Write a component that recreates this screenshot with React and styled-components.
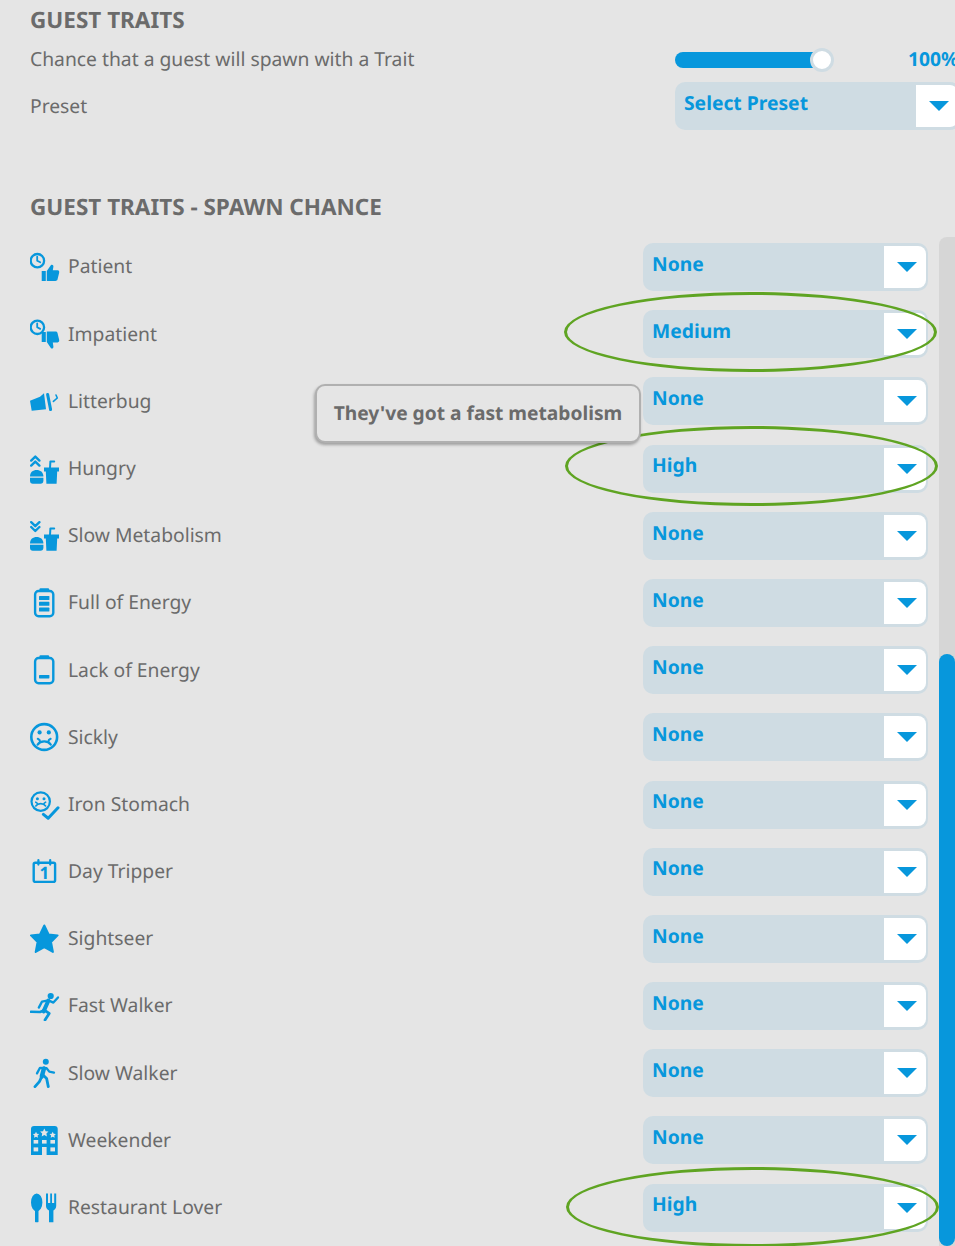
import React from 'react';
import styled, { createGlobalStyle } from 'styled-components';

const BLUE = '#0797dc';
const BG = '#e5e5e5';

const GlobalStyle = createGlobalStyle`
  html, body {
    margin: 0;
    padding: 0;
    background: ${BG};
    overflow: hidden;
  }
`;

const Page = styled.div`
  position: relative;
  width: 955px;
  height: 1246px;
  overflow: hidden;
  background: ${BG};
  color: #6b6b6b;
  font-family: "Noto Sans", "Open Sans", sans-serif;
  text-rendering: geometricPrecision;
  display: flex;
  flex-direction: column;
`;

const Heading = styled.h2`
  margin: ${(p) => p.$margin};
  padding-left: 30px;
  font-size: 22.5px;
  line-height: 28px;
  font-weight: 700;
`;

const TopRow = styled.div`
  display: flex;
  align-items: center;
  box-sizing: border-box;
  height: 48px;
  padding: ${(p) => p.$pad || 0}px 0 0 30px;
`;

const TopLabel = styled.div`
  width: 645px;
  flex: none;
  font-size: 19.3px;
  line-height: 26px;
  padding-bottom: ${(p) => p.$lift || 0}px;
`;

const Slider = styled.div`
  position: relative;
  width: 146px;
  height: 16px;
  flex: none;
  background: ${BLUE};
  border-radius: 8px;
`;

const Thumb = styled.div`
  position: absolute;
  top: -4px;
  left: 135px;
  width: 18px;
  height: 18px;
  box-sizing: content-box;
  background: #fff;
  border: 3px solid #cfdce3;
  border-radius: 50%;
`;

const Percent = styled.div`
  margin-left: 87px;
  flex: none;
  color: ${BLUE};
  font-size: 19.3px;
  font-weight: 700;
  line-height: 26px;
  padding-bottom: 2px;
`;

const Select = styled.div`
  width: 285px;
  height: 48px;
  flex: none;
  box-sizing: border-box;
  display: flex;
  justify-content: space-between;
  align-items: center;
  padding: 3px 2px 3px 9px;
  background: #cfdce3;
  border-radius: 10px;
`;

const SelectValue = styled.span`
  color: ${BLUE};
  font-size: 19.3px;
  font-weight: 700;
  line-height: 26px;
  padding-bottom: 6.5px;
`;

const SelectButton = styled.div`
  width: 42px;
  height: 42px;
  flex: none;
  box-sizing: border-box;
  padding: 16px 0 0 13px;
  background: #fff;
  border-radius: 0 8px 8px 0;

  svg {
    display: block;
  }
`;

const ListSection = styled.div`
  display: flex;
  flex: 1;
  min-height: 0;
  margin-top: 16px;
`;

const List = styled.div`
  flex: 1;
  display: flex;
  flex-direction: column;
  gap: 19.2px;
  padding: 6px 11px 0 30px;
`;

const Row = styled.div`
  display: flex;
  align-items: center;
  justify-content: space-between;
  height: 48px;
`;

const RowLabel = styled.div`
  display: flex;
  align-items: center;
  gap: 8px;
  font-size: 19.3px;
  line-height: 26px;

  span {
    margin-top: -0.6px;
    margin-bottom: 0.6px;
  }
`;

const IconBox = styled.svg`
  width: 30px;
  height: 30px;
  flex: none;
  fill: ${BLUE};
  color: ${BLUE};
`;

const Scrollbar = styled.div`
  width: 16px;
  flex: none;
  display: flex;
  flex-direction: column;
  justify-content: flex-end;
  background: #d6d6d6;
  border-radius: 8px 0 0 0;
`;

const ScrollThumb = styled.div`
  height: 592px;
  background: ${BLUE};
  border-radius: 8px;
`;

const Tooltip = styled.div`
  position: absolute;
  top: 384px;
  left: 315px;
  width: 326px;
  height: 59px;
  box-sizing: border-box;
  display: flex;
  align-items: center;
  justify-content: center;
  padding-bottom: 2px;
  background: ${BG};
  border: 2px solid #b0b0b0;
  border-radius: 10px;
  box-shadow: -1px 2px 3px rgba(0, 0, 0, 0.3);
  font-size: 19.2px;
  font-weight: 700;
  line-height: 26px;
`;

const Ring = styled.div`
  position: absolute;
  top: ${(p) => p.$top}px;
  left: ${(p) => p.$left}px;
  width: 373px;
  height: 80px;
  box-sizing: border-box;
  border: 3px solid #5fa422;
  border-radius: 50%;
`;

const Arrow = () => (
  <svg width="20" height="10" viewBox="0 0 20 10">
    <path d="M0 0H20L10 10Z" fill={BLUE} />
  </svg>
);

const Line = ({ d, w = 2 }) => (
  <path d={d} fill="none" stroke="currentColor" strokeWidth={w} strokeLinecap="round" strokeLinejoin="round" />
);

const Clock = ({ cy }) => (
  <g>
    <circle cx="7.4" cy={cy} r="6.7" fill="none" stroke="currentColor" strokeWidth="2.3" />
    <Line d={`M7.2 ${cy - 4}V${cy}L10.2 ${cy + 1.6}`} w={1.8} />
  </g>
);

const Burger = () => (
  <g>
    <path d="M0 22.6C0 18 3 16 6.6 16S13.4 18 13.4 22.6Z" />
    <path d="M0 23.8H13.4V26.5C13.4 28.6 12.3 29.8 10.5 29.8H2.8C1 29.8 0 28.6 0 26.5Z" />
    <path d="M14 13.6H29V17.6H27.2L26.6 29.8H16.4L15.8 17.6H14Z" />
    <Line d="M20 14L20.4 7.4H24.2" w={2} />
  </g>
);

const Battery = ({ children }) => (
  <g>
    <rect x="5.1" y="3" width="18.2" height="25.2" rx="3.5" fill="none" stroke="currentColor" strokeWidth="2.4" />
    <rect x="9.4" y="0.3" width="9.8" height="3.6" rx="1.2" />
    {children}
  </g>
);

const ICONS = {
  patient: (
    <>
      <Clock cy={8.7} />
      <path d="M11.7 19H15.8V29H11.7Z" />
      <path d="M16.8 19L21 13C22.4 12.2 23.6 13.2 23.4 14.8L22.8 18.2H27.6C29 18.2 29.5 19.6 29.1 21L27.5 27.6C27.2 28.6 26.4 29 25.4 29H16.8Z" />
    </>
  ),
  impatient: (
    <>
      <Clock cy={8.3} />
      <path d="M11.7 13H15.8V23H11.7Z" />
      <path d="M16.8 12.6H25.4C26.4 12.6 27.2 13 27.5 14L29.1 20.6C29.5 22 29 23.4 27.6 23.4H22.8L23.4 27.4C23.6 29 22.4 30 21 29.2L16.8 23Z" />
    </>
  ),
  litter: (
    <>
      <path d="M0 14.7L10 10.7L14 7.3L16 23.3L1.7 24.7Z" />
      <Line d="M17.6 8.4L20.6 23.6" w={3} />
      <Line d="M26 9L27.3 12L23.4 15.4" w={1.6} />
    </>
  ),
  hungry: (
    <>
      <Line d="M1.2 6.6L5.3 2.6L9.4 6.6" w={2.4} />
      <Line d="M1.2 11.6L5.3 7.6L9.4 11.6" w={2.4} />
      <Burger />
    </>
  ),
  slow: (
    <>
      <Line d="M1.2 1.2L5.3 5.2L9.4 1.2" w={2.4} />
      <Line d="M1.2 6L5.3 10L9.4 6" w={2.4} />
      <Burger />
    </>
  ),
  full: (
    <Battery>
      <rect x="9" y="8" width="10.4" height="4" rx="0.6" />
      <rect x="9" y="13.8" width="10.4" height="4" rx="0.6" />
      <rect x="9" y="19.6" width="10.4" height="4" rx="0.6" />
    </Battery>
  ),
  lack: (
    <Battery>
      <rect x="9" y="20" width="10.4" height="3.4" rx="0.6" />
    </Battery>
  ),
  sickly: (
    <>
      <circle cx="14.2" cy="15" r="12.9" fill="none" stroke="currentColor" strokeWidth="2.6" />
      <circle cx="9.6" cy="10.4" r="2.1" />
      <circle cx="18.8" cy="10.4" r="2.1" />
      <Line d="M7.6 22.6C8.6 21.2 11 19.4 14.2 19.4S19.8 21.2 20.8 22.6" w={2.2} />
      <Line d="M7.8 16.8C9.4 17.4 10 18.4 10.2 20M20.6 16.8C19 17.4 18.4 18.4 18.2 20" w={2.2} />
    </>
  ),
  iron: (
    <>
      <circle cx="10.7" cy="11.6" r="9.2" fill="none" stroke="currentColor" strokeWidth="2.2" />
      <circle cx="7.4" cy="8.8" r="1.5" />
      <circle cx="14" cy="8.8" r="1.5" />
      <Line d="M5.8 16C6.6 14.8 8.4 13.6 10.7 13.6S14.8 14.8 15.6 16" w={1.6} />
      <Line d="M5.8 12.2C6.8 12.6 7.4 13.2 7.6 14.2M15.6 12.2C14.6 12.6 14 13.2 13.8 14.2" w={1.6} />
      <Line d="M13.4 24.4L18.2 28.2L28 17.8" w={3} />
    </>
  ),
  day: (
    <>
      <rect x="3.7" y="5.7" width="21.4" height="19.2" rx="1.6" fill="none" stroke="currentColor" strokeWidth="2.4" />
      <Line d="M8.4 3V7.6M20.2 3V7.6" w={2.2} />
      <text x="14.4" y="21.8" textAnchor="middle" fontFamily="Noto Sans, sans-serif" fontWeight="700" fontSize="17">1</text>
    </>
  ),
  star: (
    <path
      d="M14.3 1.5L18.6 10.4L27.6 11.4L21 18L22.9 28L14.3 23.2L5.7 28L7.6 18L1 11.4L10 10.4Z"
      stroke={BLUE}
      strokeWidth="2"
      strokeLinejoin="round"
    />
  ),
  fast: (
    <>
      <circle cx="20.7" cy="5" r="3.1" />
      <Line d="M28 6.4L23.4 11.6L18.4 9.4L12 10.6L8.8 16.6" w={2.3} />
      <Line d="M18.4 9.6L13.6 20.4" w={4} />
      <Line d="M14 19L19.2 22.4L15 29" w={2.8} />
      <Line d="M13.2 19.8L10 21L1 20.8" w={2.6} />
    </>
  ),
  walk: (
    <>
      <circle cx="15.8" cy="3.8" r="3" />
      <Line d="M7 15.4L10 9.8L16.6 10.2L19.3 13.6L24 14.6" w={2.3} />
      <Line d="M14 10.4L11.8 18.4" w={4.4} />
      <Line d="M11.8 18.6L9.4 23.6L5 28.6" w={2.8} />
      <Line d="M13 17L16.6 20.4L18.3 28.6" w={2.8} />
    </>
  ),
  hotel: (
    <>
      <path d="M1 4C1 2 2 1 4 1H24.7C26.7 1 27.7 2 27.7 4V30H1Z" />
      <g fill={BG}>
        <path d="M6 6.8L7 8.8L9.2 9.1L7.6 10.6L8 12.8L6 11.8L4 12.8L4.4 10.6L2.8 9.1L5 8.8Z" />
        <path d="M14.3 3.6L15.6 6.2L18.5 6.6L16.4 8.6L16.9 11.4L14.3 10.1L11.7 11.4L12.2 8.6L10.1 6.6L13 6.2Z" />
        <path d="M22.7 6.8L23.7 8.8L25.9 9.1L24.3 10.6L24.7 12.8L22.7 11.8L20.7 12.8L21.1 10.6L19.5 9.1L21.7 8.8Z" />
        <rect x="3.6" y="15" width="4.6" height="3.6" />
        <rect x="12" y="15" width="4.6" height="3.6" />
        <rect x="20.4" y="15" width="4.6" height="3.6" />
        <rect x="3.6" y="22.4" width="4.6" height="4" />
        <rect x="12" y="22" width="4.6" height="8" />
        <rect x="20.4" y="22.4" width="4.6" height="4" />
      </g>
    </>
  ),
  food: (
    <>
      <ellipse cx="6.7" cy="9.4" rx="5.7" ry="8.9" />
      <rect x="5" y="14" width="3.5" height="15.2" rx="0.6" />
      <path d="M16 0.4H18V10H20.2V0.4H22V10H24.2V0.4H26.2V13C26.2 15.4 24.8 16.8 23.4 17.4V29.2H19V17.4C17.4 16.8 16 15.4 16 13Z" />
    </>
  ),
};

const TRAITS = [
  ['patient', 'Patient', 'None'],
  ['impatient', 'Impatient', 'Medium'],
  ['litter', 'Litterbug', 'None'],
  ['hungry', 'Hungry', 'High'],
  ['slow', 'Slow Metabolism', 'None'],
  ['full', 'Full of Energy', 'None'],
  ['lack', 'Lack of Energy', 'None'],
  ['sickly', 'Sickly', 'None'],
  ['iron', 'Iron Stomach', 'None'],
  ['day', 'Day Tripper', 'None'],
  ['star', 'Sightseer', 'None'],
  ['fast', 'Fast Walker', 'None'],
  ['walk', 'Slow Walker', 'None'],
  ['hotel', 'Weekender', 'None'],
  ['food', 'Restaurant Lover', 'High'],
];

const Dropdown = ({ value }) => (
  <Select>
    <SelectValue>{value}</SelectValue>
    <SelectButton>
      <Arrow />
    </SelectButton>
  </Select>
);

export default function App() {
  return (
    <Page>
      <GlobalStyle />
      <Heading $margin="6px 0 0">GUEST TRAITS</Heading>
      <TopRow $pad={4}>
        <TopLabel $lift={2}>Chance that a guest will spawn with a Trait</TopLabel>
        <Slider>
          <Thumb />
        </Slider>
        <Percent>100%</Percent>
      </TopRow>
      <TopRow>
        <TopLabel>Preset</TopLabel>
        <Dropdown value="Select Preset" />
      </TopRow>
      <Heading $margin="63px 0 0">GUEST TRAITS - SPAWN CHANCE</Heading>
      <ListSection>
        <List>
          {TRAITS.map(([icon, label, value]) => (
            <Row key={label}>
              <RowLabel>
                <IconBox viewBox="0 0 30 30">{ICONS[icon]}</IconBox>
                <span>{label}</span>
              </RowLabel>
              <Dropdown value={value} />
            </Row>
          ))}
        </List>
        <Scrollbar>
          <ScrollThumb />
        </Scrollbar>
      </ListSection>
      <Ring $top={292} $left={564} />
      <Ring $top={426} $left={565} />
      <Ring $top={1167} $left={566} />
      <Tooltip>They've got a fast metabolism</Tooltip>
    </Page>
  );
}
